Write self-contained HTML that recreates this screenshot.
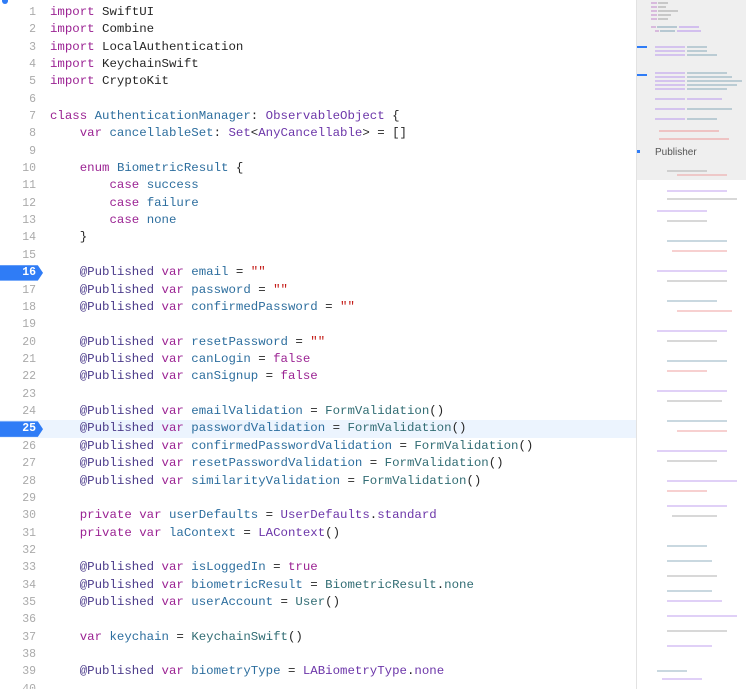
<!DOCTYPE html>
<html><head><meta charset="utf-8"><style>
html,body{margin:0;padding:0;background:#fff;width:746px;height:689px;overflow:hidden;position:relative}
.code{position:absolute;left:0;top:3.8px;width:636px;font-family:"Liberation Mono",monospace;font-size:12.4px;line-height:17.37px;color:#262626}
.l{height:17.37px;position:relative;white-space:pre}
.n{position:absolute;left:0;width:36px;text-align:right;color:#aaa;font-size:11.5px}
.t{position:absolute;left:50px}
.hl{background:#ecf4fe}
.mk .n{color:#fff;font-weight:bold}
.mk::before{content:"";position:absolute;left:0;top:1px;width:43px;height:15.4px;background:#2f7cf6;clip-path:polygon(0 0,88% 0,100% 50%,88% 100%,0 100%)}
.k{color:#9b2393}.d{color:#2d6e9e}.a{color:#4b3b8a}.s{color:#c41a16}.p{color:#326d74}.o{color:#6c36a9}
.mm{position:absolute;left:636px;top:0;width:110px;height:689px;border-left:1px solid #e2e2e2}
.mm .g{position:absolute;left:0;top:0;width:110px;height:180px;background:#efefef}
</style></head><body>
<div class="code">
<div class="l"><span class="n">1</span><span class="t"><span class="k">import</span> SwiftUI</span></div>
<div class="l"><span class="n">2</span><span class="t"><span class="k">import</span> Combine</span></div>
<div class="l"><span class="n">3</span><span class="t"><span class="k">import</span> LocalAuthentication</span></div>
<div class="l"><span class="n">4</span><span class="t"><span class="k">import</span> KeychainSwift</span></div>
<div class="l"><span class="n">5</span><span class="t"><span class="k">import</span> CryptoKit</span></div>
<div class="l"><span class="n">6</span></div>
<div class="l"><span class="n">7</span><span class="t"><span class="k">class</span> <span class="d">AuthenticationManager</span>: <span class="o">ObservableObject</span> {</span></div>
<div class="l"><span class="n">8</span><span class="t">    <span class="k">var</span> <span class="d">cancellableSet</span>: <span class="o">Set</span>&lt;<span class="o">AnyCancellable</span>&gt; = []</span></div>
<div class="l"><span class="n">9</span></div>
<div class="l"><span class="n">10</span><span class="t">    <span class="k">enum</span> <span class="d">BiometricResult</span> {</span></div>
<div class="l"><span class="n">11</span><span class="t">        <span class="k">case</span> <span class="d">success</span></span></div>
<div class="l"><span class="n">12</span><span class="t">        <span class="k">case</span> <span class="d">failure</span></span></div>
<div class="l"><span class="n">13</span><span class="t">        <span class="k">case</span> <span class="d">none</span></span></div>
<div class="l"><span class="n">14</span><span class="t">    }</span></div>
<div class="l"><span class="n">15</span></div>
<div class="l mk"><span class="n">16</span><span class="t">    <span class="a">@Published</span> <span class="k">var</span> <span class="d">email</span> = <span class="s">""</span></span></div>
<div class="l"><span class="n">17</span><span class="t">    <span class="a">@Published</span> <span class="k">var</span> <span class="d">password</span> = <span class="s">""</span></span></div>
<div class="l"><span class="n">18</span><span class="t">    <span class="a">@Published</span> <span class="k">var</span> <span class="d">confirmedPassword</span> = <span class="s">""</span></span></div>
<div class="l"><span class="n">19</span></div>
<div class="l"><span class="n">20</span><span class="t">    <span class="a">@Published</span> <span class="k">var</span> <span class="d">resetPassword</span> = <span class="s">""</span></span></div>
<div class="l"><span class="n">21</span><span class="t">    <span class="a">@Published</span> <span class="k">var</span> <span class="d">canLogin</span> = <span class="k">false</span></span></div>
<div class="l"><span class="n">22</span><span class="t">    <span class="a">@Published</span> <span class="k">var</span> <span class="d">canSignup</span> = <span class="k">false</span></span></div>
<div class="l"><span class="n">23</span></div>
<div class="l"><span class="n">24</span><span class="t">    <span class="a">@Published</span> <span class="k">var</span> <span class="d">emailValidation</span> = <span class="p">FormValidation</span>()</span></div>
<div class="l mk hl"><span class="n">25</span><span class="t">    <span class="a">@Published</span> <span class="k">var</span> <span class="d">passwordValidation</span> = <span class="p">FormValidation</span>()</span></div>
<div class="l"><span class="n">26</span><span class="t">    <span class="a">@Published</span> <span class="k">var</span> <span class="d">confirmedPasswordValidation</span> = <span class="p">FormValidation</span>()</span></div>
<div class="l"><span class="n">27</span><span class="t">    <span class="a">@Published</span> <span class="k">var</span> <span class="d">resetPasswordValidation</span> = <span class="p">FormValidation</span>()</span></div>
<div class="l"><span class="n">28</span><span class="t">    <span class="a">@Published</span> <span class="k">var</span> <span class="d">similarityValidation</span> = <span class="p">FormValidation</span>()</span></div>
<div class="l"><span class="n">29</span></div>
<div class="l"><span class="n">30</span><span class="t">    <span class="k">private</span> <span class="k">var</span> <span class="d">userDefaults</span> = <span class="o">UserDefaults</span>.<span class="o">standard</span></span></div>
<div class="l"><span class="n">31</span><span class="t">    <span class="k">private</span> <span class="k">var</span> <span class="d">laContext</span> = <span class="o">LAContext</span>()</span></div>
<div class="l"><span class="n">32</span></div>
<div class="l"><span class="n">33</span><span class="t">    <span class="a">@Published</span> <span class="k">var</span> <span class="d">isLoggedIn</span> = <span class="k">true</span></span></div>
<div class="l"><span class="n">34</span><span class="t">    <span class="a">@Published</span> <span class="k">var</span> <span class="d">biometricResult</span> = <span class="p">BiometricResult</span>.<span class="p">none</span></span></div>
<div class="l"><span class="n">35</span><span class="t">    <span class="a">@Published</span> <span class="k">var</span> <span class="d">userAccount</span> = <span class="p">User</span>()</span></div>
<div class="l"><span class="n">36</span></div>
<div class="l"><span class="n">37</span><span class="t">    <span class="k">var</span> <span class="d">keychain</span> = <span class="p">KeychainSwift</span>()</span></div>
<div class="l"><span class="n">38</span></div>
<div class="l"><span class="n">39</span><span class="t">    <span class="a">@Published</span> <span class="k">var</span> <span class="d">biometryType</span> = <span class="o">LABiometryType</span>.<span class="o">none</span></span></div>
<div class="l"><span class="n">40</span></div>
</div>
<div style="position:absolute;left:2px;top:0;width:6px;height:4px;background:#2f7cf6;border-radius:0 0 3px 3px"></div>
<div class="mm"><div class="g"></div>
<div style="position:absolute;left:0;top:46px;width:10px;height:2px;background:#2f7cf6"></div>
<div style="position:absolute;left:0;top:74px;width:10px;height:2px;background:#2f7cf6"></div>
<div style="position:absolute;left:0;top:150px;width:3px;height:3px;background:#2f7cf6"></div>
<div style="position:absolute;left:18px;top:147px;font-family:'Liberation Sans',sans-serif;font-size:10px;color:#555">Publisher</div>
<svg width="110" height="689" style="position:absolute;left:0;top:0">
<g opacity=".55">
<rect x="14" y="2" width="6" height="2" fill="#c78fd0"/><rect x="21" y="2" width="10" height="2" fill="#aaa"/>
<rect x="14" y="6" width="6" height="2" fill="#c78fd0"/><rect x="21" y="6" width="8" height="2" fill="#aaa"/>
<rect x="14" y="10" width="6" height="2" fill="#c78fd0"/><rect x="21" y="10" width="20" height="2" fill="#aaa"/>
<rect x="14" y="14" width="6" height="2" fill="#c78fd0"/><rect x="21" y="14" width="13" height="2" fill="#aaa"/>
<rect x="14" y="18" width="6" height="2" fill="#c78fd0"/><rect x="21" y="18" width="10" height="2" fill="#aaa"/>
<rect x="14" y="26" width="5" height="2" fill="#c78fd0"/><rect x="20" y="26" width="20" height="2" fill="#8ab"/><rect x="42" y="26" width="20" height="2" fill="#b9e"/>
<rect x="18" y="30" width="4" height="2" fill="#c78fd0"/><rect x="23" y="30" width="15" height="2" fill="#8ab"/><rect x="40" y="30" width="24" height="2" fill="#b9e"/>
</g>
<g opacity=".5">
<rect x="18" y="46" width="30" height="2" fill="#b9e"/><rect x="50" y="46" width="20" height="2" fill="#8ab"/>
<rect x="18" y="50" width="30" height="2" fill="#b9e"/><rect x="50" y="50" width="20" height="2" fill="#8ab"/>
<rect x="18" y="54" width="30" height="2" fill="#b9e"/><rect x="50" y="54" width="30" height="2" fill="#8ab"/>
<rect x="18" y="72" width="30" height="2" fill="#b9e"/><rect x="50" y="72" width="40" height="2" fill="#8ab"/>
<rect x="18" y="76" width="30" height="2" fill="#b9e"/><rect x="50" y="76" width="45" height="2" fill="#8ab"/>
<rect x="18" y="80" width="30" height="2" fill="#b9e"/><rect x="50" y="80" width="55" height="2" fill="#8ab"/>
<rect x="18" y="84" width="30" height="2" fill="#b9e"/><rect x="50" y="84" width="50" height="2" fill="#8ab"/>
<rect x="18" y="88" width="30" height="2" fill="#b9e"/><rect x="50" y="88" width="40" height="2" fill="#8ab"/>
<rect x="18" y="98" width="30" height="2" fill="#b9e"/><rect x="50" y="98" width="35" height="2" fill="#b9e"/>
<rect x="18" y="108" width="30" height="2" fill="#b9e"/><rect x="50" y="108" width="45" height="2" fill="#8ab"/>
<rect x="18" y="118" width="30" height="2" fill="#b9e"/><rect x="50" y="118" width="30" height="2" fill="#8ab"/>
<rect x="22" y="130" width="60" height="2" fill="#e99"/><rect x="22" y="138" width="70" height="2" fill="#e99"/>
</g>
<g opacity=".45">
<rect x="30" y="170" width="40" height="2" fill="#aaa"/><rect x="40" y="174" width="50" height="2" fill="#e99"/>
<rect x="30" y="190" width="60" height="2" fill="#b9e"/><rect x="30" y="198" width="70" height="2" fill="#aaa"/>
<rect x="20" y="210" width="50" height="2" fill="#b9e"/><rect x="30" y="220" width="40" height="2" fill="#aaa"/>
<rect x="30" y="240" width="60" height="2" fill="#8ab"/><rect x="35" y="250" width="55" height="2" fill="#e99"/>
<rect x="20" y="270" width="70" height="2" fill="#b9e"/><rect x="30" y="280" width="60" height="2" fill="#aaa"/>
<rect x="30" y="300" width="50" height="2" fill="#8ab"/><rect x="40" y="310" width="55" height="2" fill="#e99"/>
<rect x="20" y="330" width="70" height="2" fill="#b9e"/><rect x="30" y="340" width="50" height="2" fill="#aaa"/>
<rect x="30" y="360" width="60" height="2" fill="#8ab"/><rect x="30" y="370" width="40" height="2" fill="#e99"/>
<rect x="20" y="390" width="70" height="2" fill="#b9e"/><rect x="30" y="400" width="55" height="2" fill="#aaa"/>
<rect x="30" y="420" width="60" height="2" fill="#8ab"/><rect x="40" y="430" width="50" height="2" fill="#e99"/>
<rect x="20" y="450" width="70" height="2" fill="#b9e"/><rect x="30" y="460" width="50" height="2" fill="#aaa"/>
<rect x="30" y="480" width="70" height="2" fill="#b9e"/><rect x="30" y="490" width="40" height="2" fill="#e99"/>
<rect x="30" y="505" width="60" height="2" fill="#b9e"/><rect x="35" y="515" width="45" height="2" fill="#aaa"/>
<rect x="30" y="545" width="40" height="2" fill="#8ab"/><rect x="30" y="560" width="45" height="2" fill="#8ab"/>
<rect x="30" y="575" width="50" height="2" fill="#aaa"/><rect x="30" y="590" width="45" height="2" fill="#8ab"/>
<rect x="30" y="600" width="55" height="2" fill="#b9e"/><rect x="30" y="615" width="70" height="2" fill="#b9e"/>
<rect x="30" y="630" width="60" height="2" fill="#aaa"/><rect x="30" y="645" width="45" height="2" fill="#b9e"/>
<rect x="20" y="670" width="30" height="2" fill="#8ab"/><rect x="25" y="678" width="40" height="2" fill="#b9e"/>
</g>
</svg>
</div>
</body></html>
